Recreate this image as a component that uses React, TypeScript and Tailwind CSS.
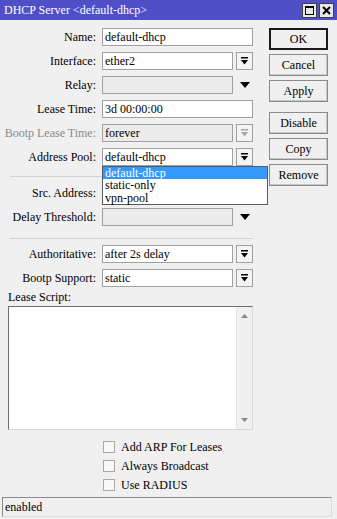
import React from "react";

const ComboArrow = ({ disabled = false }: { disabled?: boolean }) => (
  <svg width="9" height="8" viewBox="0 0 9 8" fill={disabled ? "#a8a8a8" : "#000"}>
    <rect x="1" y="0" width="7" height="1.5" />
    <path d="M1 3h7l-3.5 4.5z" />
  </svg>
);

const PlainArrow = () => (
  <div className="w-[17px] h-[18px] flex items-center justify-center ml-[3px]">
    <svg width="10" height="6" viewBox="0 0 10 6" fill="#000">
      <path d="M0 0h10l-5 6z" />
    </svg>
  </div>
);

const ArrowBtn = ({ disabled = false }: { disabled?: boolean }) => (
  <div className="w-[17px] h-[18px] ml-[3px] border border-[#a0a0a0] bg-[#f4f4f4] flex items-center justify-center">
    <ComboArrow disabled={disabled} />
  </div>
);

const Field = ({
  value,
  disabled = false,
  full = false,
}: {
  value?: string;
  disabled?: boolean;
  full?: boolean;
}) => (
  <div
    className={`h-[18px] border border-[#a0a0a0] px-[2px] leading-[16px] whitespace-nowrap overflow-hidden ${
      full ? "w-[151px]" : "w-[131px]"
    } ${disabled ? "bg-[#ececec]" : "bg-white"}`}
  >
    {value}
  </div>
);

const Row = ({
  label,
  grey = false,
  children,
}: {
  label: string;
  grey?: boolean;
  children?: React.ReactNode;
}) => (
  <div className="flex h-[24px] items-center">
    <div className={`w-[96px] text-right whitespace-nowrap ${grey ? "text-[#8a8a8a]" : "text-black"}`}>
      {label}
    </div>
    <div className="ml-[6px] flex items-center">{children}</div>
  </div>
);

const Btn = ({ label, def = false, className = "" }: { label: string; def?: boolean; className?: string }) => (
  <div
    className={`w-[59px] h-[22px] flex items-center justify-center bg-[#f0f0f0] ${
      def ? "border-2 border-[#1a1a1a]" : "border border-[#8c8c8c] shadow-[inset_-1px_-1px_0_#c8c8c8]"
    } ${className}`}
  >
    {label}
  </div>
);

const Check = ({ label }: { label: string }) => (
  <div className="flex items-center h-[19px] pl-[103px]">
    <div className="w-[12px] h-[12px] border border-[#a8a8a8] bg-[#f8f8f8]" />
    <span className="ml-[6px]">{label}</span>
  </div>
);

export default function App() {
  return (
    <div
      className="w-[337px] h-[519px] bg-[#f0f0f0] relative overflow-hidden text-[12px] text-black"
      style={{ fontFamily: '"Liberation Serif", "Noto Sans CJK TC", serif' }}
    >
      {/* title bar */}
      <div className="h-[20px] bg-[#4f4fc8] flex items-center pl-[4px] pr-[3px] text-white text-[12px]">
        <span className="flex-1 whitespace-nowrap">DHCP Server &lt;default-dhcp&gt;</span>
        <div className="flex gap-[2px]">
          <div className="w-[15px] h-[15px] bg-[#e8e8e8] border border-[#404040] flex items-center justify-center">
            <div className="w-[9px] h-[9px] border border-black border-t-2" />
          </div>
          <div className="w-[15px] h-[15px] bg-[#e8e8e8] border border-[#404040] flex items-center justify-center">
            <svg width="9" height="9" viewBox="0 0 9 9" stroke="#000" strokeWidth="2">
              <path d="M1 1l7 7M8 1l-7 7" />
            </svg>
          </div>
        </div>
      </div>

      <div className="flex pt-[5px]">
        {/* form */}
        <div className="w-[253px] flex flex-col">
          <Row label="Name:">
            <Field value="default-dhcp" full />
          </Row>
          <Row label="Interface:">
            <Field value="ether2" />
            <ArrowBtn />
          </Row>
          <Row label="Relay:">
            <Field disabled />
            <PlainArrow />
          </Row>
          <Row label="Lease Time:">
            <Field value="3d 00:00:00" full />
          </Row>
          <Row label="Bootp Lease Time:" grey>
            <Field value="forever" disabled />
            <ArrowBtn disabled />
          </Row>
          <Row label="Address Pool:">
            <Field value="default-dhcp" />
            <ArrowBtn />
          </Row>
          <div className="h-px bg-[#d2d2d2] ml-[10px] mt-[7px]" />
          <div className="mt-[4px]">
            <Row label="Src. Address:" />
          </div>
          <Row label="Delay Threshold:">
            <Field disabled />
            <PlainArrow />
          </Row>
          <div className="h-px bg-[#d2d2d2] ml-[10px] mt-[9px]" />
          <div className="mt-[3px]">
            <Row label="Authoritative:">
              <Field value="after 2s delay" />
              <ArrowBtn />
            </Row>
          </div>
          <Row label="Bootp Support:">
            <Field value="static" />
            <ArrowBtn />
          </Row>
          <div className="pl-[8px] h-[16px] leading-[14px]">Lease Script:</div>
          <div className="ml-[8px] w-[245px] h-[124px] bg-white border border-[#6e6e6e] border-r-[#d8d8d8] border-b-[#d8d8d8] flex justify-end">
            <div className="w-[16px] h-full bg-[#f0f0f0] border-l border-[#e4e4e4] flex flex-col items-center justify-between py-[7px]">
              <svg width="7" height="4" viewBox="0 0 7 4" fill="#8a8a8a">
                <path d="M0 4h7l-3.5-4z" />
              </svg>
              <svg width="7" height="4" viewBox="0 0 7 4" fill="#8a8a8a">
                <path d="M0 0h7l-3.5 4z" />
              </svg>
            </div>
          </div>
          <div className="mt-[7px] flex flex-col">
            <Check label="Add ARP For Leases" />
            <Check label="Always Broadcast" />
            <Check label="Use RADIUS" />
          </div>
        </div>

        {/* buttons */}
        <div className="ml-[16px] pt-[3px] flex flex-col gap-[4px]">
          <Btn label="OK" def />
          <Btn label="Cancel" />
          <Btn label="Apply" />
          <Btn label="Disable" className="mt-[6px]" />
          <Btn label="Copy" />
          <Btn label="Remove" />
        </div>
      </div>

      {/* pool dropdown */}
      <div className="absolute left-[102px] top-[166px] w-[166px] bg-white border border-[#5a5a5a] z-10 flex flex-col">
        <div className="h-[12px] leading-[12px] bg-[#3399ff] text-white px-[2px]">default-dhcp</div>
        <div className="h-[13px] leading-[13px] px-[2px]">static-only</div>
        <div className="h-[12px] leading-[12px] px-[2px]">vpn-pool</div>
      </div>

      {/* status bar */}
      <div className="absolute left-[2px] top-[497px] w-[330px] h-[20px] border border-[#8a8a8a] border-r-[#dcdcdc] border-b-[#dcdcdc] px-[2px] leading-[18px]">
        enabled
      </div>
    </div>
  );
}
